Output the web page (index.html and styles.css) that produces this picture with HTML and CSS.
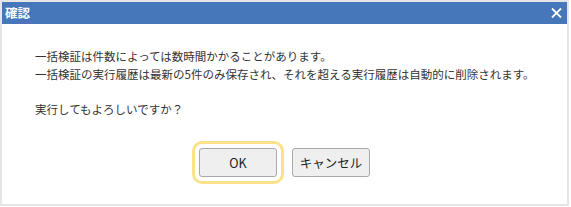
FILE: index.html
```html
<!DOCTYPE html>
<html>
<head>
  <title>確認</title>
  <link rel="stylesheet" href="styles.css">
</head>
<body>
  <div class="dialog">
    <div class="titlebar">
      <span class="title">確認</span>
      <button class="close" aria-label="閉じる">
        <svg width="11" height="10" viewBox="0 0 11 10">
          <path d="M1 0.5 L10 9.5 M10 0.5 L1 9.5" stroke="#fff" stroke-width="1.8" fill="none"/>
        </svg>
      </button>
    </div>
    <div class="content">
      <p class="message">一括検証は件数によっては数時間かかることがあります。<br>一括検証の実行履歴は最新の5件のみ保存され、それを超える実行履歴は自動的に削除されます。</p>
      <p class="message question">実行してもよろしいですか？</p>
      <div class="actions">
        <button class="btn btn-ok">OK</button>
        <button class="btn">キャンセル</button>
      </div>
    </div>
  </div>
</body>
</html>
```

FILE: styles.css
```css
:root {
  --title-bg: #4677bb;
  --frame: #e6e6e6;
  --text: #333;
  --focus: #fbe28a;
}

body {
  margin: 0;
  background: #fff;
  font-family: "Noto Sans CJK JP", "Noto Sans", sans-serif;
  color: var(--text);
}

.dialog {
  width: 565px;
  height: 202px;
  border: 2px solid var(--frame);
  display: flex;
  flex-direction: column;
}

.titlebar {
  height: 22px;
  background: var(--title-bg);
  display: flex;
  align-items: center;
  justify-content: space-between;
  padding: 0 4px 0 3px;
}

.title {
  color: #fff;
  font-size: 12.5px;
  font-weight: bold;
  line-height: 22px;
}

.close {
  background: none;
  border: none;
  padding: 0;
  width: 14px;
  height: 14px;
  display: flex;
  align-items: center;
  justify-content: center;
  cursor: pointer;
}

.content {
  flex: 1;
  padding: 24px 33px 0;
}

.message {
  margin: 0;
  font-size: 11.5px;
  line-height: 17.5px;
  white-space: nowrap;
}

.question {
  margin-top: 17.5px;
}

.actions {
  margin-top: 30px;
  display: flex;
  justify-content: center;
  gap: 15px;
}

.btn {
  width: 78px;
  height: 29px;
  background: #efefef;
  border: 1px solid #a9a9a9;
  border-radius: 3px;
  font-family: inherit;
  font-size: 12.5px;
  font-weight: normal;
  color: #222;
  padding: 0;
  cursor: pointer;
}

.btn-ok {
  outline: 3px solid var(--focus);
  outline-offset: 4px;
}
```
